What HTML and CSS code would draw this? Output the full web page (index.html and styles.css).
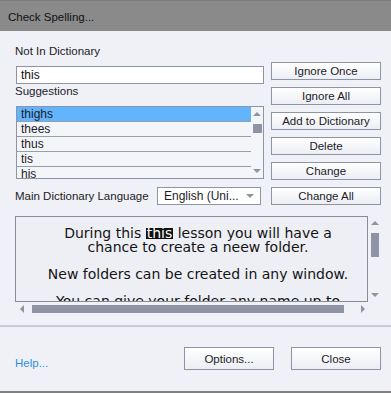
FILE: index.html
```html
<!DOCTYPE html>
<html lang="en">
  <head>
    <meta charset="UTF-8" />
    <meta name="viewport" content="width=device-width, initial-scale=1.0" />
    <title>Check Spelling</title>
    <link rel="stylesheet" href="styles.css">
  </head>
  <body>
    <div class="dialog">
      <div class="titlebar">Check Spelling...</div>

      <div class="content">
        <div class="top">
          <div class="left">
            <div class="label first">Not In Dictionary</div>
            <div class="input">this</div>
            <div class="label second">Suggestions</div>

            <div class="listbox">
              <ul class="items">
                <li class="selected">thighs</li>
                <li>thees</li>
                <li>thus</li>
                <li>tis</li>
                <li>his</li>
              </ul>
              <div class="vscroll small">
                <span class="arrow-box"><span class="arrow up"></span></span>
                <span class="thumb"></span>
                <span class="fill"></span>
                <span class="arrow-box"><span class="arrow down"></span></span>
              </div>
            </div>

            <div class="lang-row">
              <span class="label">Main Dictionary Language</span>
              <div class="select">
                <span>English (Uni...</span>
                <span class="arrow down"></span>
              </div>
            </div>
          </div>

          <div class="buttons">
            <button class="btn">Ignore Once</button>
            <button class="btn">Ignore All</button>
            <button class="btn">Add to Dictionary</button>
            <button class="btn">Delete</button>
            <button class="btn">Change</button>
            <button class="btn">Change All</button>
          </div>
        </div>

        <div class="preview">
          <div class="preview-row">
            <div class="preview-box">
              <p>During this <span class="hit">this</span> lesson you will have a<br />chance to create a neew folder.</p>
              <p>New folders can be created in any window.</p>
              <p>You can give your folder any name up to</p>
            </div>
            <div class="vscroll big">
              <span class="arrow-box"><span class="arrow up"></span></span>
              <span class="thumb"></span>
              <span class="fill"></span>
              <span class="arrow-box"><span class="arrow down"></span></span>
            </div>
          </div>
          <div class="hscroll">
            <span class="arrow-box"><span class="arrow left"></span></span>
            <span></span>
            <span class="thumb"></span>
            <span></span>
            <span class="arrow-box"><span class="arrow right"></span></span>
            <span></span>
          </div>
        </div>
      </div>

      <div class="separator"></div>

      <div class="footer">
        <a href="#" class="help">Help...</a>
        <div class="footer-buttons">
          <button class="btn big">Options...</button>
          <button class="btn big">Close</button>
        </div>
      </div>
    </div>
  </body>
</html>
```

FILE: styles.css
```css
* {
  margin: 0;
  padding: 0;
  box-sizing: border-box;
}

body {
  font-family: "Liberation Sans", Arial, sans-serif;
  font-size: 11.5px;
  color: #1c1c28;
  background-color: #f0f1f6;
}

.dialog {
  width: 391px;
  height: 393px;
  display: flex;
  flex-direction: column;
  border-bottom: 2px solid #808080;
}

.titlebar {
  height: 31px;
  background-color: #8a8a8a;
  border-top: 1px solid #7a7a7a;
  padding: 2px 0 0 8px;
  display: flex;
  align-items: center;
  color: #101018;
  font-size: 11.5px;
}

.content {
  padding: 13px 10px 0 15px;
}

.top {
  display: flex;
  gap: 7px;
}

.left {
  width: 249px;
  display: flex;
  flex-direction: column;
}

.label {
  line-height: 15px;
  height: 15px;
}

.label.first {
  margin-bottom: 7px;
}

.label.second {
  height: 14px;
  line-height: 14px;
  margin-bottom: 8px;
}

.input {
  margin-left: 1px;
  height: 18px;
  background-color: #fff;
  border: 1px solid #8d93a8;
  padding-left: 4px;
  line-height: 16px;
  font-size: 12px;
  color: #111;
}

.listbox {
  margin-left: 1px;
  height: 73px;
  border: 1px solid #8d93a8;
  background-color: #f4f5f9;
  display: flex;
  overflow: hidden;
}

.items {
  list-style: none;
  flex: 1;
}

.items li {
  height: 15px;
  line-height: 14px;
  border-bottom: 1px solid #9a9ca6;
  padding-left: 4px;
  font-size: 12px;
  color: #1c1c28;
}

.items li.selected {
  background-color: #62b4fc;
}

.vscroll {
  display: flex;
  flex-direction: column;
  align-items: center;
}

.vscroll.small {
  width: 12px;
}

.vscroll.small .arrow-box {
  height: 14px;
}

.vscroll.small .thumb {
  width: 9px;
  height: 9px;
  margin-top: 3px;
}

.vscroll.big {
  width: 13px;
}

.vscroll.big .arrow-box {
  height: 14px;
}

.vscroll.big .thumb {
  width: 8px;
  height: 24px;
  margin-top: 3px;
}

.arrow-box {
  display: flex;
  align-items: center;
  justify-content: center;
}

.fill {
  flex: 1;
}

.thumb {
  background-color: #8e94a6;
}

.arrow {
  width: 0;
  height: 0;
}

.arrow.up {
  border-left: 4px solid transparent;
  border-right: 4px solid transparent;
  border-bottom: 4px solid #8e94a6;
}

.arrow.down {
  border-left: 4px solid transparent;
  border-right: 4px solid transparent;
  border-top: 4px solid #8e94a6;
}

.arrow.left {
  border-top: 4px solid transparent;
  border-bottom: 4px solid transparent;
  border-right: 4px solid #8e94a6;
}

.arrow.right {
  border-top: 4px solid transparent;
  border-bottom: 4px solid transparent;
  border-left: 4px solid #8e94a6;
}

.lang-row {
  margin-top: 8px;
  height: 18px;
  display: flex;
  align-items: center;
}

.select {
  margin-left: auto;
  margin-right: 3px;
  width: 104px;
  height: 18px;
  border: 1px solid #8d93a8;
  background-color: #fff;
  display: flex;
  align-items: center;
  padding: 0 6px 0 6px;
  font-size: 12px;
}

.select .arrow {
  margin-left: auto;
}

.buttons {
  width: 110px;
  padding-top: 18px;
  display: flex;
  flex-direction: column;
  gap: 7px;
}

.btn {
  height: 18px;
  font-family: "Liberation Sans", Arial, sans-serif;
  font-size: 11.5px;
  color: #1c1c28;
  background: linear-gradient(#ffffff, #eceef4);
  border: 1px solid #8d94a8;
  cursor: pointer;
}

.btn.big {
  height: 23px;
  width: 90px;
}

.preview {
  margin-top: 11px;
}

.preview-row {
  display: flex;
}

.preview-box {
  width: 353px;
  height: 86px;
  border: 1px solid #8a8c94;
  background-color: #eeeff4;
  overflow: hidden;
  padding: 9px 0 0 13px;
  text-align: center;
  white-space: nowrap;
  font-family: "DejaVu Sans", Verdana, sans-serif;
  font-size: 14px;
  line-height: 14px;
  color: #141414;
}

.preview-box p {
  margin-bottom: 13px;
}

.hit {
  display: inline-block;
  background-color: #111;
  color: #fff;
  line-height: 11px;
  padding: 0 1px;
}

.hscroll {
  height: 14px;
  display: grid;
  grid-template-columns: 14px 3px 312px 1fr 14px 11px;
  align-items: center;
}

.hscroll .thumb {
  height: 8px;
}

.separator {
  margin-top: 9px;
  height: 2px;
  background-color: #cbccd3;
}

.footer {
  flex: 1;
  display: flex;
  align-items: flex-start;
  padding: 20px 10px 0 15px;
}

.help {
  margin-top: 9px;
  line-height: 14px;
  color: #2d8ee0;
  text-decoration: none;
  font-size: 11.5px;
}

.footer-buttons {
  margin-left: auto;
  display: flex;
  gap: 17px;
}
```
